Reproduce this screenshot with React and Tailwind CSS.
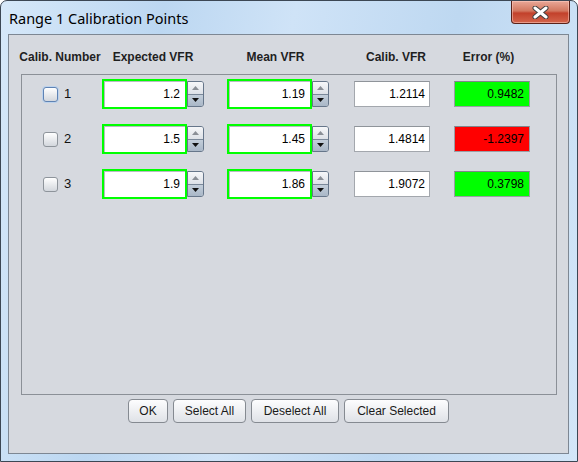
import React from "react";

const rows = [
  { n: "1", exp: "1.2", mean: "1.19", calib: "1.2114", err: "0.9482", ok: true, focus: true },
  { n: "2", exp: "1.5", mean: "1.45", calib: "1.4814", err: "-1.2397", ok: false },
  { n: "3", exp: "1.9", mean: "1.86", calib: "1.9072", err: "0.3798", ok: true },
];

function Spinner({ value }) {
  return (
    <div className="flex items-center">
      <div className="w-[85px] h-[30px] border-2 border-[#00ff00] bg-white shadow-[inset_1px_1px_0_#b8bcc2] flex items-center justify-end pr-[5px] text-[12px] text-black">
        {value}
      </div>
      <div className="w-[17px] h-[26px] flex flex-col border border-[#66768a] rounded-r-[3px] overflow-hidden">
        <div className="flex-1 flex items-center justify-center bg-gradient-to-b from-[#f6f7f9] to-[#dde1e7] border-b border-[#7a8899]">
          <svg width="7" height="4" viewBox="0 0 7 4"><path d="M0 4 L3.5 0 L7 4 Z" fill="#8a8f96" /></svg>
        </div>
        <div className="flex-1 flex items-center justify-center bg-gradient-to-b from-[#c3ceda] to-[#a9b7c7]">
          <svg width="7" height="4" viewBox="0 0 7 4"><path d="M0 0 L7 0 L3.5 4 Z" fill="#111" /></svg>
        </div>
      </div>
    </div>
  );
}

function Btn({ children, w }) {
  return (
    <button className={`${w} h-[24px] rounded-[4px] border border-[#858a91] bg-gradient-to-b from-[#fdfdfe] to-[#dfe2e7] text-[12px] text-[#1a1a1a] flex items-center justify-center`}>
      {children}
    </button>
  );
}

export default function App() {
  return (
    <div className="w-[578px] h-[462px] flex flex-col border border-[#3c4754] rounded-t-[7px] overflow-hidden bg-[linear-gradient(100deg,#d6e8f9_0%,#bcd7f1_25%,#cfe3f7_45%,#bed8f1_70%,#d3e6f8_100%)] font-['Liberation_Sans',Arial,sans-serif]">
      <div className="h-[33px] flex items-start shrink-0">
        <div className="pl-[8px] pt-[7px] text-[14.5px] leading-[20px] text-black font-['Noto_Sans',sans-serif]">
          Range 1 Calibration Points
        </div>
        <div className="ml-auto mr-[7px] w-[59px] h-[23px] rounded-b-[4px] border border-t-0 border-[#5a2219] bg-[linear-gradient(180deg,#e9a898_0%,#d2775f_45%,#c2412b_55%,#d4654c_100%)] flex items-center justify-center shadow-[inset_0_0_0_1px_rgba(255,210,200,0.5)]">
          <svg width="17" height="13" viewBox="0 0 17 13">
            <path d="M3 2 L14 11 M14 2 L3 11" stroke="#404040" strokeWidth="5" strokeLinecap="round" />
            <path d="M3 2 L14 11 M14 2 L3 11" stroke="#ffffff" strokeWidth="3" strokeLinecap="round" />
          </svg>
        </div>
      </div>
      <div className="flex-1 ml-[7px] mr-[8px] mb-[7px] border border-[#7d8793] bg-[#d6d9df] flex flex-col">
        <div className="h-[39px] pt-[15px] flex text-[12px] leading-[14px] font-bold text-[#1f1f1f]">
          <div className="w-[102px] text-center">Calib. Number</div>
          <div className="w-[84px] text-center">Expected VFR</div>
          <div className="w-[161px] text-center">Mean VFR</div>
          <div className="w-[80px] text-center">Calib. VFR</div>
          <div className="w-[105px] text-center">Error (%)</div>
        </div>
        <div className="ml-[12px] w-[536px] h-[321px] border border-[#8b9097] pt-[4px] flex flex-col gap-[15px]">
          {rows.map((r) => (
            <div key={r.n} className="h-[30px] flex items-center">
              <div className="w-[80px] pl-[21px] flex items-center gap-[6px]">
                <div className={`w-[15px] h-[15px] rounded-[3px] border bg-gradient-to-b from-white to-[#d3d7dd] ${r.focus ? "border-[#5f83b4] shadow-[0_0_0_1px_#bcd2ec]" : "border-[#8e949b]"}`} />
                <span className="text-[13px] text-[#111]">{r.n}</span>
              </div>
              <Spinner value={r.exp} />
              <div className="ml-[23px]">
                <Spinner value={r.mean} />
              </div>
              <div className="ml-[25px] w-[76px] h-[26px] border border-[#a3a7ad] border-t-[#8f949a] bg-white flex items-center justify-end pr-[4px] text-[12px] text-black">
                {r.calib}
              </div>
              <div className={`ml-[24px] w-[76px] h-[26px] border border-[#9a9ea4] border-t-[#80858b] flex items-center justify-end pr-[5px] text-[12px] text-black ${r.ok ? "bg-[#00ff00]" : "bg-[#ff0000]"}`}>
                {r.err}
              </div>
            </div>
          ))}
        </div>
        <div className="mt-[4px] flex justify-center gap-[5px]">
          <Btn w="w-[40px]">OK</Btn>
          <Btn w="w-[73px]">Select All</Btn>
          <Btn w="w-[88px]">Deselect All</Btn>
          <Btn w="w-[105px]">Clear Selected</Btn>
        </div>
      </div>
    </div>
  );
}
